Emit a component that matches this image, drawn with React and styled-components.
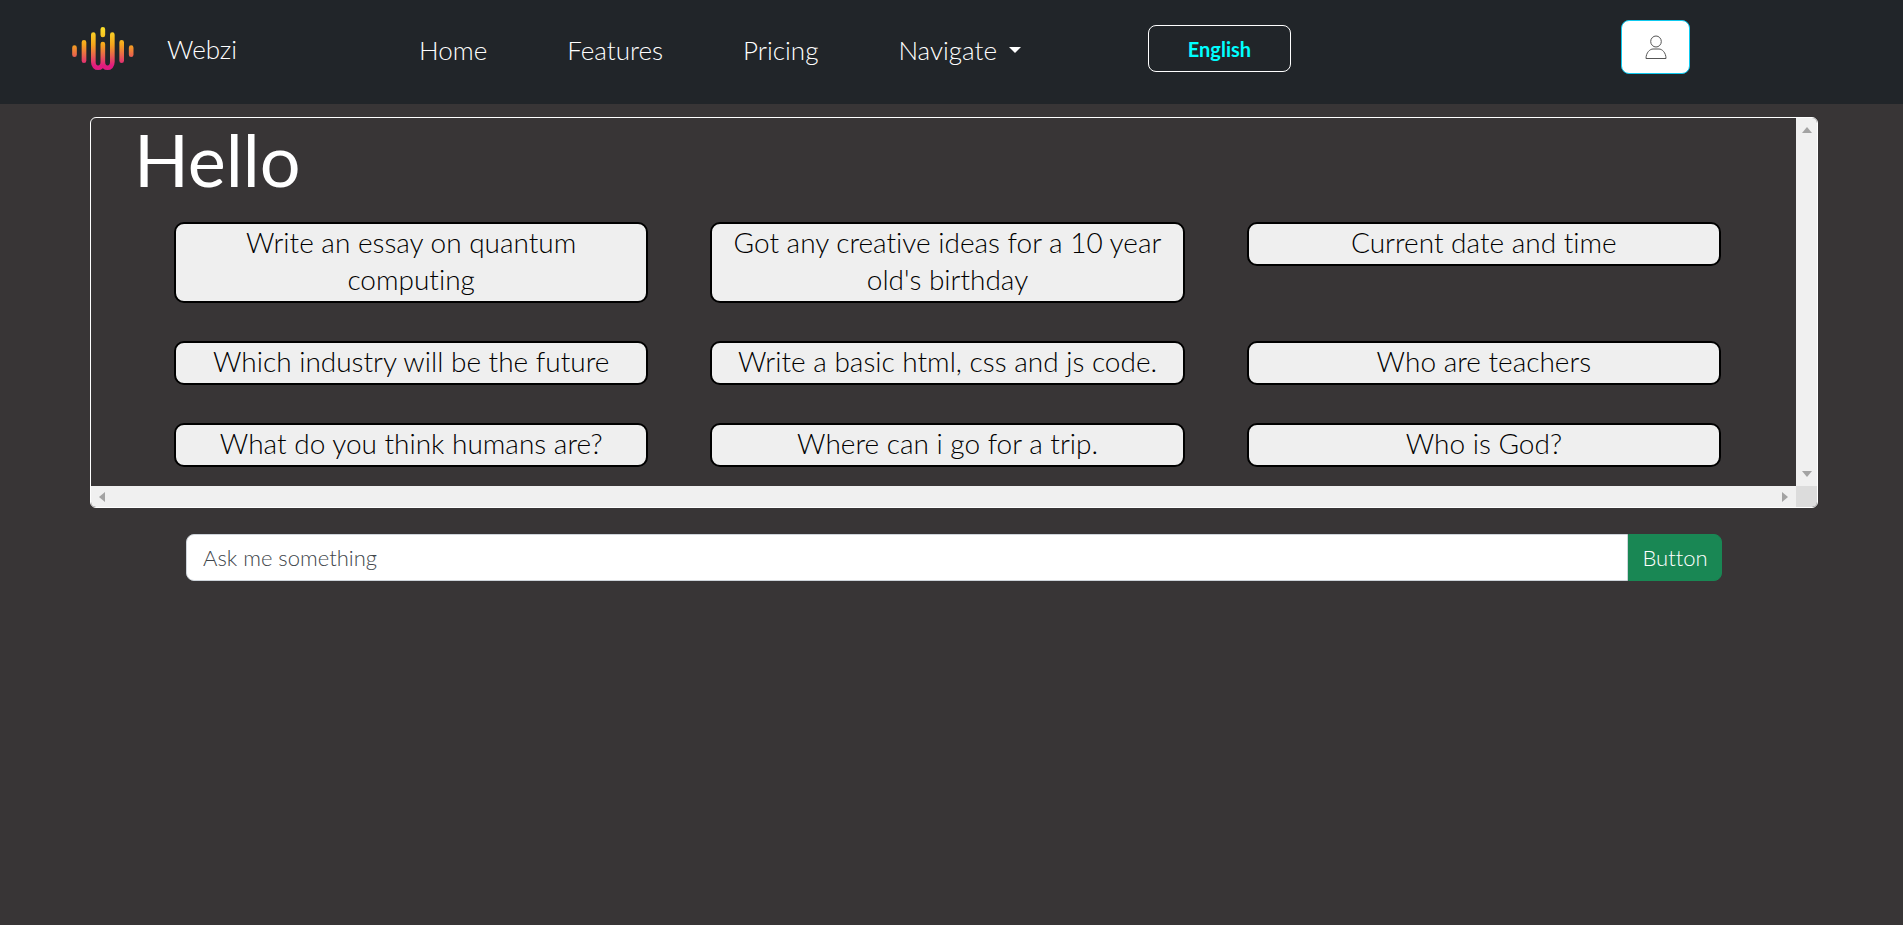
import React from "react";
import styled, { createGlobalStyle } from "styled-components";

const GlobalStyle = createGlobalStyle`
  *, *::before, *::after { box-sizing: border-box; }
  body {
    margin: 0;
    background: #383536;
    color: #fff;
    font-family: "Century Gothic", Lato, sans-serif;
    font-weight: 300;
    font-variant-ligatures: none;
  }
  button, input { font: inherit; }
`;

const Header = styled.header`
  display: flex;
  align-items: flex-start;
  height: 104px;
  padding: 20px 213px 0 72px;
  background: #212529;
`;

const Brand = styled.a`
  display: flex;
  align-items: center;
  gap: 33px;
  width: 347px;
  height: 58px;
  color: #fff;
  font-size: 26px;
  text-decoration: none;
`;

const NavList = styled.ul`
  display: flex;
  gap: 80px;
  margin: 0;
  padding: 0;
  list-style: none;
`;

const NavLink = styled.a`
  display: flex;
  align-items: center;
  gap: 12px;
  height: 60px;
  color: #fff;
  font-size: 26px;
  text-decoration: none;
`;

const Caret = styled.span`
  border: 6px solid transparent;
  border-top-color: currentColor;
  border-bottom: 0;
`;

const LanguageButton = styled.button`
  width: 143px;
  height: 47px;
  margin: 5px 0 0 127px;
  border: 1px solid #fff;
  border-radius: 8px;
  background: transparent;
  color: aqua;
  font-size: 20px;
  font-weight: 700;
`;

const UserButton = styled.button`
  display: grid;
  place-items: center;
  width: 69px;
  height: 54px;
  margin-left: auto;
  padding: 0;
  border: 1px solid #0dcaf0;
  border-radius: 8px;
  background: #fff;
  color: #555;
`;

const Main = styled.main`
  padding: 13px 85px 0 90px;
`;

const Panel = styled.section`
  display: grid;
  grid-template-columns: 1fr 21px;
  grid-template-rows: auto 21px;
  overflow: hidden;
  border: 1px solid #fff;
  border-radius: 6px;
`;

const PanelBody = styled.div`
  padding: 0 75px 19px 83px;
`;

const Greeting = styled.h1`
  margin: 0 0 22px -40px;
  font-size: 72px;
  font-weight: 400;
  line-height: 82px;
`;

const PromptGrid = styled.div`
  display: grid;
  grid-template-columns: repeat(3, 1fr);
  align-items: start;
  gap: 38px 62px;
`;

const PromptButton = styled.button`
  padding: 0 6px 3px;
  border: 2px solid #000;
  border-radius: 10px;
  background: #efefef;
  color: #000;
  font-size: 28px;
  line-height: 37px;
`;

const ScrollTrack = styled.div`
  display: flex;
  flex-direction: ${(p) => (p.$vertical ? "column" : "row")};
  align-items: center;
  justify-content: space-between;
  padding: ${(p) => (p.$vertical ? "9px 0" : "0 8px")};
  background: #f0f0f0;
`;

const ScrollCorner = styled.div`
  background: #dcdcdc;
`;

const AskForm = styled.form`
  display: flex;
  height: 47px;
  margin: 26px 96px 0;
`;

const AskInput = styled.input`
  flex: 1;
  min-width: 0;
  padding: 0 16px;
  border: 1px solid #ced4da;
  border-radius: 8px 0 0 8px;
  background: #fff;
  color: #212529;
  font-size: 22px;
  &::placeholder { color: #41464b; opacity: 1; }
`;

const AskButton = styled.button`
  width: 94px;
  border: 1px solid #198754;
  border-radius: 0 8px 8px 0;
  background: #198754;
  color: #fff;
  font-size: 22px;
`;

const Logo = () => (
  <svg width="62" height="44" viewBox="0 0 186 132" fill="none" aria-hidden="true">
    <defs>
      <linearGradient id="wave" gradientUnits="userSpaceOnUse" x1="0" y1="0" x2="0" y2="132">
        <stop offset="0" stopColor="#fbe22a" />
        <stop offset="0.4" stopColor="#f5a51c" />
        <stop offset="0.65" stopColor="#e8624e" />
        <stop offset="0.88" stopColor="#e01a80" />
      </linearGradient>
    </defs>
    <path
      stroke="url(#wave)"
      strokeWidth="14"
      strokeLinecap="round"
      strokeLinejoin="round"
      d="M7.5 62V83M36 46V101M149 46V101M177.500 62V83M92.500 7V24M64 23V105C64 128 92.500 128 92.500 105V51M92.500 105C92.500 128 121 128 121 105V23"
    />
  </svg>
);

const PersonIcon = () => (
  <svg width="22" height="24" viewBox="0 0 22 24" fill="none" stroke="currentColor" aria-hidden="true">
    <ellipse cx="11" cy="6.500" rx="5.300" ry="5.500" />
    <path d="M1 23.500C1 17.500 5 14 8 14H14C17 14 21 17.500 21 23.500Z" />
  </svg>
);

const arrows = {
  up: ["0 0 10 6", "M0 6L5 0L10 6Z"],
  down: ["0 0 10 6", "M0 0H10L5 6Z"],
  left: ["0 0 6 10", "M6 0V10L0 5Z"],
  right: ["0 0 6 10", "M0 0L6 5L0 10Z"],
};

const Arrow = ({ to }) => {
  const [box, d] = arrows[to];
  const [, , w, h] = box.split(" ");
  return (
    <svg width={w} height={h} viewBox={box} fill="#a3a3a3" aria-hidden="true">
      <path d={d} />
    </svg>
  );
};

const prompts = [
  "Write an essay on quantum computing",
  "Got any creative ideas for a 10 year old's birthday",
  "Current date and time",
  "Which industry will be the future",
  "Write a basic html, css and js code.",
  "Who are teachers",
  "What do you think humans are?",
  "Where can i go for a trip.",
  "Who is God?",
];

export default function App() {
  return (
    <>
      <GlobalStyle />
      <Header>
        <Brand href="#">
          <Logo />
          <span>Webzi</span>
        </Brand>
        <nav>
          <NavList>
            <li><NavLink href="#">Home</NavLink></li>
            <li><NavLink href="#">Features</NavLink></li>
            <li><NavLink href="#">Pricing</NavLink></li>
            <li><NavLink href="#">Navigate<Caret /></NavLink></li>
          </NavList>
        </nav>
        <LanguageButton type="button">English</LanguageButton>
        <UserButton type="button" aria-label="Account">
          <PersonIcon />
        </UserButton>
      </Header>
      <Main>
        <Panel>
          <PanelBody>
            <Greeting>Hello</Greeting>
            <PromptGrid>
              {prompts.map((text) => (
                <PromptButton type="button" key={text}>{text}</PromptButton>
              ))}
            </PromptGrid>
          </PanelBody>
          <ScrollTrack $vertical>
            <Arrow to="up" />
            <Arrow to="down" />
          </ScrollTrack>
          <ScrollTrack>
            <Arrow to="left" />
            <Arrow to="right" />
          </ScrollTrack>
          <ScrollCorner />
        </Panel>
        <AskForm onSubmit={(e) => e.preventDefault()}>
          <AskInput type="text" placeholder="Ask me something" aria-label="Ask me something" />
          <AskButton type="submit">Button</AskButton>
        </AskForm>
      </Main>
    </>
  );
}
